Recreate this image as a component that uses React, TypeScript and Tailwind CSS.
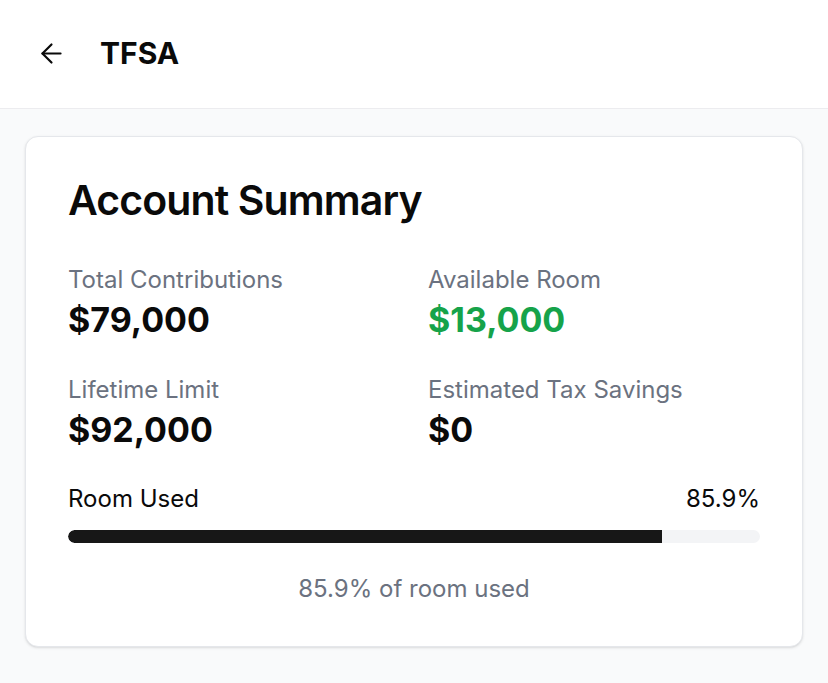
import React from "react";

function ArrowLeft() {
  return (
    <svg width="31" height="31" viewBox="0 0 24 24" fill="none" stroke="currentColor" strokeWidth="1.7" strokeLinecap="round" strokeLinejoin="round">
      <path d="m12 19-7-7 7-7" />
      <path d="M19 12H5" />
    </svg>
  );
}

function Stat({ label, value, green }: { label: string; value: string; green?: boolean }) {
  return (
    <div className="flex flex-col gap-[3px]">
      <div className="text-[24px] leading-[32px] text-[#6b7280]">{label}</div>
      <div className={`text-[34px] leading-[42px] font-bold ${green ? "text-[#16a34a]" : "text-[#0a0a0a]"}`}>{value}</div>
    </div>
  );
}

export default function App() {
  const pct = 85.9;
  return (
    <div className="min-h-[683px] bg-[#f9fafb] text-[#0a0a0a]" style={{ fontFamily: "Inter, 'Noto Sans', sans-serif" }}>
      <header className="h-[109px] bg-white border-b border-[#ececef] flex items-center pl-[36px] pb-[2px]">
        <ArrowLeft />
        <h1 className="ml-[33px] text-[30px] font-bold leading-[36px]">TFSA</h1>
      </header>
      <main className="px-[25px] pt-[27px] pb-[36px]">
        <div className="bg-white border border-[#e5e7eb] rounded-[13px] shadow-sm px-[42px] pt-[38px] pb-[41px]">
          <h2 className="text-[41px] leading-[50px] font-semibold tracking-[-0.9px]">Account Summary</h2>
          <div className="mt-[39px] grid grid-cols-2 gap-x-[28px] gap-y-[33px]">
            <Stat label="Total Contributions" value="$79,000" />
            <Stat label="Available Room" value="$13,000" green />
            <Stat label="Lifetime Limit" value="$92,000" />
            <Stat label="Estimated Tax Savings" value="$0" />
          </div>
          <div className="mt-[32px] flex justify-between text-[24px] leading-[32px]">
            <span>Room Used</span>
            <span>{pct}%</span>
          </div>
          <div className="mt-[15px] h-[13px] rounded-full bg-[#f3f4f6] overflow-hidden">
            <div className="h-full bg-[#171717] rounded-l-full" style={{ width: `${pct}%` }} />
          </div>
          <div className="mt-[30px] text-center text-[24px] leading-[32px] text-[#6b7280]">{pct}% of room used</div>
        </div>
      </main>
    </div>
  );
}
